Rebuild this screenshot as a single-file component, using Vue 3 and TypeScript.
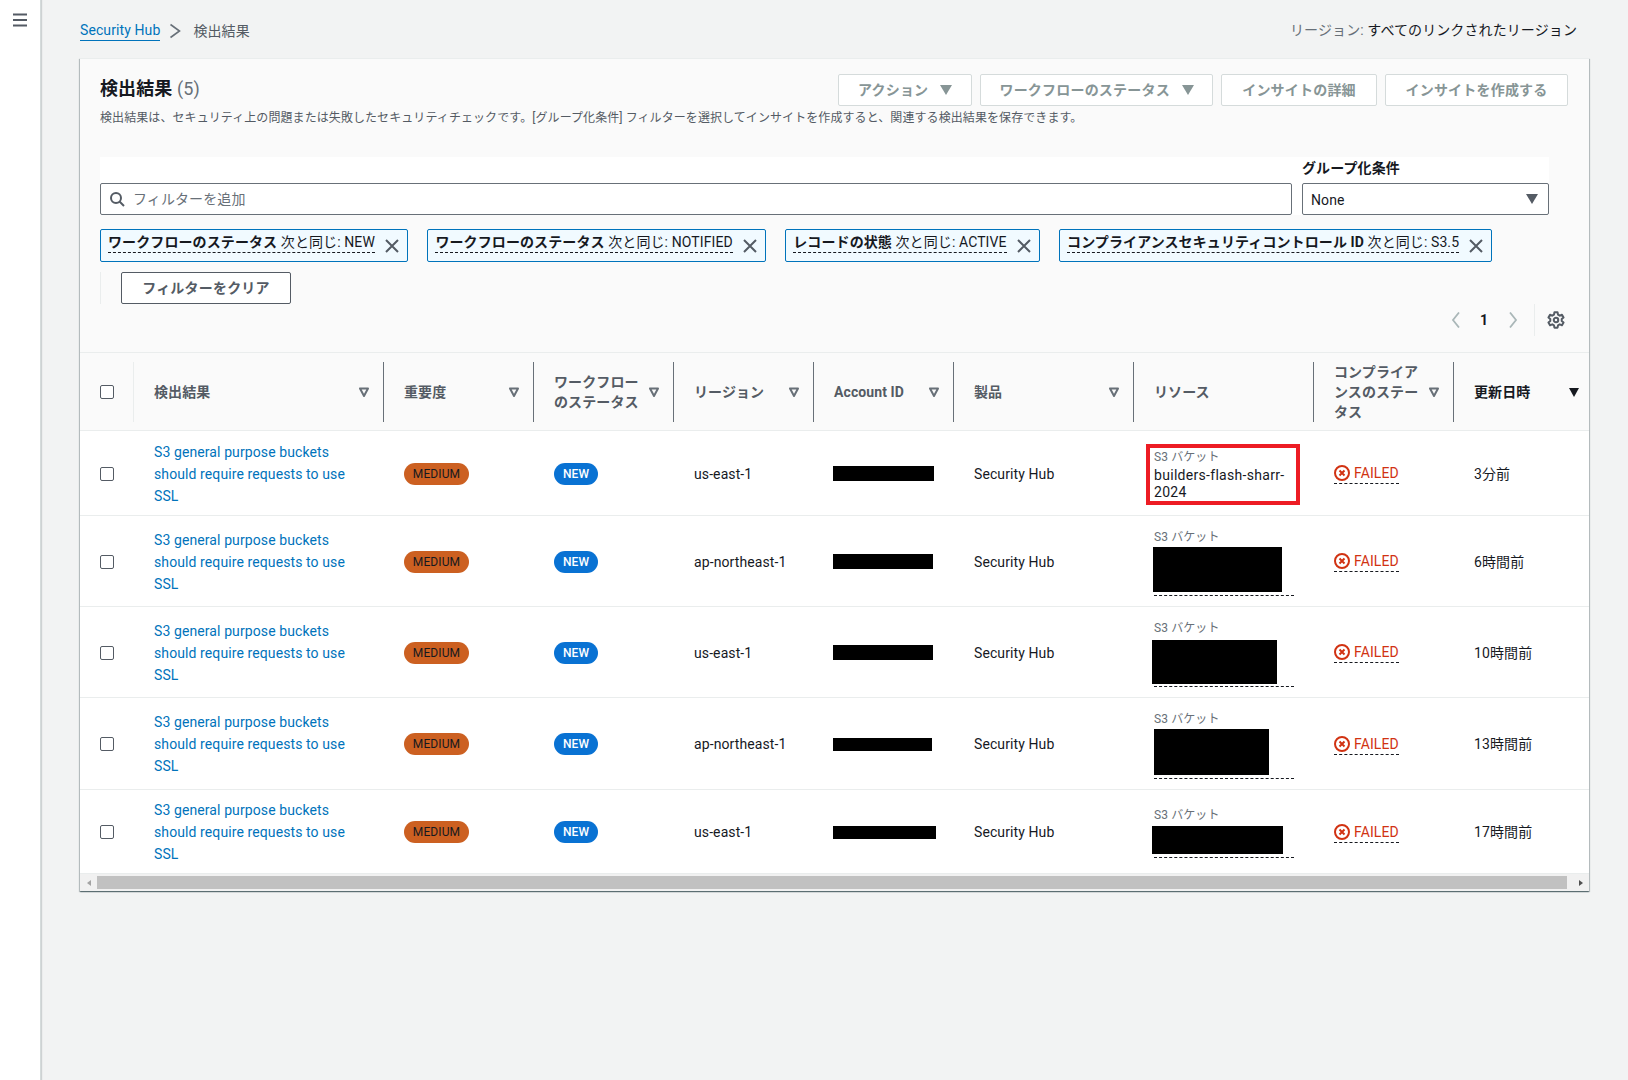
<script setup lang="ts">
interface Row {
  height: number
  region: string
  pad: number
  time: string
  account: number
  accountH: number
  name?: string
  mask?: { x: number; gap: number; w: number; h: number; under: number }
}

const tokens = [
  { key: 'ワークフローのステータス', rest: ' 次と同じ: NEW' },
  { key: 'ワークフローのステータス', rest: ' 次と同じ: NOTIFIED' },
  { key: 'レコードの状態', rest: ' 次と同じ: ACTIVE' },
  { key: 'コンプライアンスセキュリティコントロール ID', rest: ' 次と同じ: S3.5' },
]

const columns = [
  { label: '検出結果', sort: true },
  { label: '重要度', sort: true },
  { label: 'ワークフロー\nのステータス', sort: true },
  { label: 'リージョン', sort: true },
  { label: 'Account ID', sort: true },
  { label: '製品', sort: true },
  { label: 'リソース', sort: false },
  { label: 'コンプライア\nンスのステー\nタス', sort: true },
]

const rows: Row[] = [
  { height: 85, region: 'us-east-1', pad: 17.5, time: '3分前', account: 101, accountH: 15, name: 'builders-flash-sharr-2024' },
  { height: 91, region: 'ap-northeast-1', pad: 12.5, time: '6時間前', account: 100, accountH: 15, mask: { x: -1, gap: 1.5, w: 129, h: 45, under: 3 } },
  { height: 91, region: 'us-east-1', pad: 12.5, time: '10時間前', account: 100, accountH: 15, mask: { x: -2, gap: 3.5, w: 125, h: 44, under: 2 } },
  { height: 92, region: 'ap-northeast-1', pad: 12.5, time: '13時間前', account: 99, accountH: 13, mask: { x: 0, gap: 1.5, w: 115, h: 46, under: 3 } },
  { height: 84, region: 'us-east-1', pad: 16.5, time: '17時間前', account: 103, accountH: 13, mask: { x: -2, gap: 2.5, w: 131, h: 28, under: 3 } },
]
</script>

<template>
  <div class="app">
    <aside class="side">
      <svg class="menu" width="16" height="16" viewBox="0 0 16 16" aria-label="menu">
        <path d="M1 2.500h14M1 8h14M1 13.500h14" fill="none" stroke="#545b64" stroke-width="2" />
      </svg>
    </aside>
    <main class="main">
      <div class="crumbs">
        <a class="crumb-link">Security Hub</a>
        <svg class="crumb-sep" width="16" height="16" viewBox="0 0 16 16">
          <path d="M3.500 1.500L12.500 8l-9 6.500" fill="none" stroke="#687078" stroke-width="1.600" />
        </svg>
        <span class="crumb-now">検出結果</span>
        <span class="region"><span class="region-key">リージョン:</span> すべてのリンクされたリージョン</span>
      </div>

      <section class="card">
        <div class="head">
          <div class="title-row">
            <h1 class="title">検出結果 <span class="count">(5)</span></h1>
            <div class="actions">
              <button class="btn w-action">アクション <i class="caret"></i></button>
              <button class="btn w-status">ワークフローのステータス <i class="caret"></i></button>
              <button class="btn w-detail">インサイトの詳細</button>
              <button class="btn w-create">インサイトを作成する</button>
            </div>
          </div>
          <p class="desc">検出結果は、セキュリティ上の問題または失敗したセキュリティチェックです。[グループ化条件] フィルターを選択してインサイトを作成すると、関連する検出結果を保存できます。</p>

          <div class="filter">
            <div class="filter-main">
              <svg class="search" width="16" height="16" viewBox="0 0 16 16">
                <circle cx="7" cy="7" r="5" fill="none" stroke="#545b64" stroke-width="2" />
                <path d="M10.500 10.500L15 15" stroke="#545b64" stroke-width="2" />
              </svg>
              <span class="placeholder">フィルターを追加</span>
            </div>
            <div class="group">
              <label class="group-label">グループ化条件</label>
              <div class="select"><span class="select-text">None</span> <i class="caret dark"></i></div>
            </div>
          </div>

          <div class="tokens">
            <div v-for="t in tokens" :key="t.key + t.rest" class="token">
              <span class="token-text"><b>{{ t.key }}</b>{{ t.rest }}</span>
              <svg width="16" height="16" viewBox="0 0 16 16">
                <path d="M2 2l12 12M14 2L2 14" stroke="#545b64" stroke-width="2" />
              </svg>
            </div>
          </div>

          <div class="clear-row">
            <button class="clear">フィルターをクリア</button>
          </div>

          <div class="pager">
            <svg width="16" height="16" viewBox="0 0 16 16"><path d="M11 .5L5 8l6 7.500" fill="none" stroke="#aab7b8" stroke-width="1.800" /></svg>
            <span class="page">1</span>
            <svg width="16" height="16" viewBox="0 0 16 16"><path d="M5 .5L11 8l-6 7.500" fill="none" stroke="#aab7b8" stroke-width="1.800" /></svg>
            <span class="pager-line"></span>
            <svg width="18" height="18" viewBox="0 0 16 16" class="gear">
              <path d="M6.600 1.200h2.800l.4 2 1.500.9 2-.7 1.400 2.400-1.600 1.300v1.800l1.600 1.300-1.400 2.400-2-.7-1.500.9-.4 2H6.600l-.4-2-1.500-.9-2 .7-1.400-2.400 1.600-1.300V7.100L1.300 5.800l1.400-2.400 2 .7 1.500-.9z" fill="none" stroke="#545b64" stroke-width="1.800" stroke-linejoin="round" />
              <circle cx="8" cy="8" r="2" fill="none" stroke="#545b64" stroke-width="1.800" />
            </svg>
          </div>
        </div>

        <div class="thead">
          <div class="th th-check"><span class="box"></span></div>
          <div v-for="c in columns" :key="c.label" class="th">
            <span class="th-label">{{ c.label }}</span>
            <svg v-if="c.sort" class="sort" width="12" height="12" viewBox="0 0 12 12">
              <path d="M2 2.500h8L6 10z" fill="none" stroke="#687078" stroke-width="2" stroke-linejoin="round" />
            </svg>
          </div>
          <div class="th th-last">
            <span class="th-label strong">更新日時</span>
            <svg class="sort" width="12" height="12" viewBox="0 0 12 12"><path d="M1 2h10L6 11z" fill="#16191f" /></svg>
          </div>
        </div>

        <div v-for="(r, i) in rows" :key="i" class="tr" :style="{ height: r.height + 'px' }">
          <div class="td td-check"><span class="box"></span></div>
          <div class="td td-link"><a class="link">S3 general purpose buckets should require requests to use SSL</a></div>
          <div class="td"><span class="badge medium">MEDIUM</span></div>
          <div class="td"><span class="badge new">NEW</span></div>
          <div class="td">{{ r.region }}</div>
          <div class="td td-acct">
            <span class="redact" :style="{ width: r.account + 'px', height: r.accountH + 'px' }"></span>
          </div>
          <div class="td">Security Hub</div>
          <div class="td td-res" :style="{ paddingTop: r.pad + 'px' }">
            <span class="res-type">S3 バケット</span>
            <span v-if="r.name" class="res-name">{{ r.name }}</span>
            <span
              v-if="r.mask"
              class="res-masked"
              :style="{ paddingTop: r.mask.gap + 'px', paddingBottom: r.mask.under + 'px' }"
            >
              <span
                class="redact"
                :style="{ width: r.mask.w + 'px', height: r.mask.h + 'px', marginLeft: r.mask.x + 'px' }"
              ></span>
            </span>
            <span v-if="r.name" class="highlight"></span>
          </div>
          <div class="td td-fail">
            <span class="failed">
              <svg width="16" height="16" viewBox="0 0 16 16">
                <circle cx="8" cy="8" r="7" fill="none" stroke="#d13212" stroke-width="2" />
                <path d="M5.500 5.500l5 5M10.500 5.500l-5 5" stroke="#d13212" stroke-width="2" />
              </svg>
              FAILED
            </span>
          </div>
          <div class="td td-time">{{ r.time }}</div>
        </div>

        <div class="scroll">
          <span class="scroll-end"><i class="arrow left"></i></span>
          <span class="thumb"></span>
          <span class="scroll-end right-end"><i class="arrow right"></i></span>
        </div>
      </section>
    </main>
  </div>
</template>

<style>
html,
body {
  margin: 0;
  background: #f2f3f3;
}
</style>

<style scoped>
.app {
  display: flex;
  min-height: 1080px;
  font-family: Roboto, 'Noto Sans CJK JP', sans-serif;
  font-size: 14px;
  letter-spacing: 0.1px;
  color: #16191f;
  background: #f2f3f3;
}
.side {
  width: 40px;
  flex: none;
  background: #fff;
  border-right: 1px solid #d5dbdb;
  box-shadow: 1px 0 1px rgba(0, 28, 36, 0.15);
}
.menu {
  display: block;
  margin: 12px 0 0 12px;
}
.main {
  width: 1509px;
  padding-left: 39px;
}
.crumbs {
  height: 58px;
  padding-top: 3px;
  box-sizing: border-box;
  display: flex;
  align-items: center;
}
.crumb-link {
  color: #0073bb;
  border-bottom: 1px solid #0073bb;
  line-height: 19px;
  margin-top: 1px;
}
.crumb-sep {
  margin: 0 10px 0 7px;
}
.crumb-now {
  color: #545b64;
  margin-top: -2px;
}
.region {
  margin-left: auto;
  padding-right: 12px;
  margin-top: -3px;
}
.region-key {
  color: #687078;
}
.card {
  background: #fafafa;
  border-top: 1px solid #eaeded;
  box-shadow: 0 1px 1px rgba(0, 28, 36, 0.4), 1px 1px 1px rgba(0, 28, 36, 0.2), -1px 1px 1px rgba(0, 28, 36, 0.2);
}
.head {
  padding: 15px 20px 0;
}
.title-row {
  display: flex;
  justify-content: space-between;
  align-items: center;
  height: 32px;
}
.title {
  margin: 0;
  font-size: 18px;
  font-weight: 700;
  line-height: 30px;
  align-self: flex-start;
}
.count {
  font-weight: 400;
  color: #687078;
}
.actions {
  display: flex;
  gap: 8px;
  margin-right: 1px;
}
.btn {
  height: 32px;
  box-sizing: border-box;
  background: #fff;
  border: 1px solid #d5dbdb;
  border-radius: 2px;
  padding: 0 0 2px;
  color: #879596;
  font: inherit;
  font-weight: 700;
  font-size: 14px;
  letter-spacing: 0.2px;
}
.w-action {
  width: 134px;
}
.w-status {
  width: 233px;
}
.w-detail {
  width: 156px;
}
.w-create {
  width: 183px;
}
.caret {
  display: inline-block;
  width: 0;
  height: 0;
  margin-left: 8px;
  border-left: 6px solid transparent;
  border-right: 6px solid transparent;
  border-top: 10px solid #879596;
}
.caret.dark {
  border-top-color: #545b64;
  margin-left: auto;
}
.desc {
  margin: 4px 0 0;
  font-size: 12px;
  line-height: 17px;
  color: #545b64;
  letter-spacing: 0.08px;
}
.filter {
  margin-top: 30px;
  width: 1449px;
  background: #fff;
  display: flex;
  gap: 10px;
  align-items: flex-end;
}
.filter-main {
  flex: 1;
  height: 32px;
  box-sizing: border-box;
  border: 1px solid #687078;
  border-radius: 2px;
  display: flex;
  align-items: center;
  gap: 8px;
  padding-left: 8px;
}
.placeholder {
  color: #687078;
  margin-top: -2px;
}
.group {
  width: 247px;
}
.group-label {
  display: block;
  height: 26px;
  line-height: 22px;
  font-weight: 700;
}
.select {
  height: 32px;
  box-sizing: border-box;
  border: 1px solid #687078;
  border-radius: 2px;
  display: flex;
  align-items: center;
  padding: 0 10px 0 8px;
}
.select-text {
  margin-top: 2px;
}
.tokens {
  margin-top: 14px;
  margin-left: -0.5px;
  display: flex;
  gap: 19px;
}
.token {
  height: 33px;
  box-sizing: border-box;
  background: #f1faff;
  border: 1px solid #0073bb;
  border-radius: 2px;
  display: flex;
  align-items: center;
  gap: 9px;
  padding: 0 7px 0 7.5px;
}
.token-text {
  line-height: 19px;
  border-bottom: 1px dashed #16191f;
  margin-top: -6px;
}
.clear-row {
  margin-top: 10px;
  border-left: 1px solid #eaeded;
  padding-left: 20px;
  height: 32px;
}
.clear {
  width: 170px;
  height: 32px;
  box-sizing: border-box;
  background: #fff;
  border: 1px solid #545b64;
  border-radius: 2px;
  padding: 0 0 2px;
  font: inherit;
  font-weight: 700;
  color: #545b64;
  letter-spacing: 0.2px;
}
.search {
  flex: none;
}
.pager {
  height: 32px;
  display: flex;
  align-items: center;
  justify-content: flex-end;
  gap: 16px;
  padding-right: 4px;
}
.page {
  font-weight: 700;
  font-size: 14px;
  width: 10px;
  text-align: center;
  margin-left: -1px;
}
.pager-line {
  width: 1px;
  height: 32px;
  background: #eaeded;
  margin-left: -3px;
}
.gear {
  margin-left: -4px;
}
.thead {
  margin-top: 16px;
  height: 79px;
  box-sizing: border-box;
  border-top: 1px solid #eaeded;
  border-bottom: 1px solid #eaeded;
  display: grid;
  grid-template-columns: 54px 250px 150px 140px 140px 140px 180px 180px 140px 135px;
  align-items: center;
}
.th {
  height: 60px;
  box-sizing: border-box;
  display: flex;
  align-items: center;
  justify-content: space-between;
  padding: 0 13px 0 20px;
  border-right: 1px solid #687078;
  font-weight: 700;
  color: #545b64;
  line-height: 20px;
}
.th-check {
  border-right-color: #eaeded;
  padding: 0 0 0 20px;
  justify-content: flex-start;
}
.th-last {
  border-right: 0;
  padding-right: 9px;
}
.th-label {
  white-space: pre-line;
}
.strong {
  color: #16191f;
}
.sort {
  flex: none;
}
.box {
  display: block;
  width: 14px;
  height: 14px;
  box-sizing: border-box;
  border: 1px solid #545b64;
  border-radius: 2px;
  background: #fff;
}
.tr {
  box-sizing: border-box;
  background: #fff;
  border-bottom: 1px solid #eaeded;
  display: grid;
  grid-template-columns: 54px 250px 150px 140px 140px 140px 180px 180px 140px 135px;
  align-items: center;
}
.td {
  padding: 1px 20px 0;
  min-width: 0;
}
.td-check {
  padding-right: 0;
}
.td-link {
  padding-right: 30px;
  line-height: 22px;
}
.link {
  color: #0073bb;
}
.td-acct {
  padding-left: 19px;
}
.redact {
  display: block;
  background: #000;
}
.badge {
  display: inline-block;
  height: 22px;
  line-height: 22px;
  border-radius: 11px;
  text-align: center;
  font-size: 12px;
}
.medium {
  width: 65px;
  background: #cc6021;
  color: #16191f;
}
.new {
  width: 44px;
  background: #0972d3;
  color: #fff;
  font-weight: 500;
}
.td-res {
  align-self: stretch;
  position: relative;
  display: flex;
  flex-direction: column;
  align-items: flex-start;
}
.res-type {
  font-size: 12px;
  line-height: 17px;
  color: #687078;
}
.res-name {
  line-height: 17.6px;
  width: 140px;
  margin-top: 1px;
  letter-spacing: 0.3px;
}
.res-masked {
  width: 140px;
  display: block;
  border-bottom: 1px dashed #16191f;
}
.highlight {
  position: absolute;
  left: 12px;
  top: 13px;
  width: 154px;
  height: 61px;
  box-sizing: border-box;
  border: 4.5px solid #ed1c24;
}
.td-fail {
  padding-top: 3px;
}
.td-time {
  padding-top: 0;
  margin-top: -1px;
}
.failed {
  display: inline-flex;
  align-items: center;
  gap: 4px;
  color: #d13212;
  border-bottom: 1px dashed #16191f;
  padding-bottom: 2px;
}
.scroll {
  height: 17px;
  background: #f1f1f1;
  display: flex;
  align-items: center;
}
.scroll-end {
  width: 17px;
  height: 17px;
  flex: none;
  display: flex;
  align-items: center;
  justify-content: center;
}
.right-end {
  margin-left: 5px;
}
.thumb {
  flex: 1;
  height: 13px;
  background: #c1c1c1;
}
.arrow {
  width: 0;
  height: 0;
  border-top: 3.5px solid transparent;
  border-bottom: 3.5px solid transparent;
}
.arrow.left {
  border-right: 4px solid #a3a3a3;
}
.arrow.right {
  border-left: 4px solid #505050;
}
</style>
